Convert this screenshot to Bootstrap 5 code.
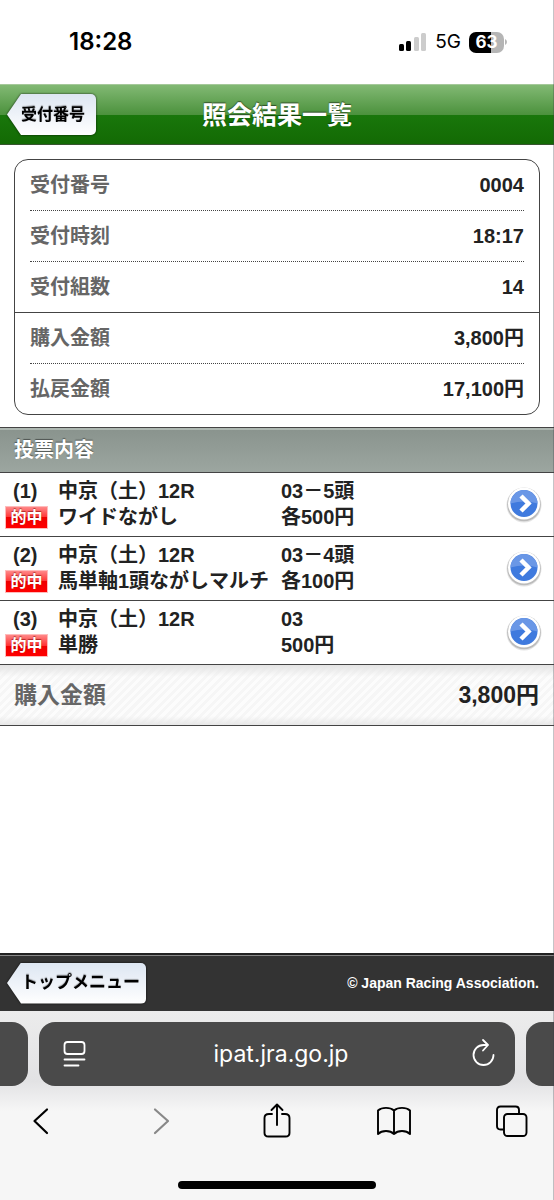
<!DOCTYPE html>
<html lang="ja">
<head>
<meta charset="utf-8">
<meta name="viewport" content="width=device-width, initial-scale=1">
<title>照会結果一覧</title>
<link href="https://cdn.jsdelivr.net/npm/bootstrap@5.3.0/dist/css/bootstrap.min.css" rel="stylesheet">
<style>
  body { font-family: "Liberation Sans", "Noto Sans CJK JP", sans-serif; font-weight: 700; font-size: 20px; line-height: 26px; color: #222; background: #fff; }
  .screen::after { content: ""; position: absolute; top: 0; right: 0; bottom: 0; width: 1px; background: rgba(60,60,70,.3); }
  .ui-font { font-family: Inter, "Noto Sans CJK JP", sans-serif; }

  .status { height: 84px; padding: 0 46px 0 69px; color: #000; }
  .clock { font-size: 24px; font-weight: 600; }
  .net { font-size: 19px; font-weight: 400; }
  .battery { width: 35px; height: 21px; border-radius: 7px; color: #fff; font-size: 17px; line-height: 21px; background: linear-gradient(90deg, #000 63%, #b5b5b5 63%); }

  .titlebar { height: 61px; padding: 0 7px; border-top: 1px solid #a5c99a; border-bottom: 1px solid #37542f;
    background: linear-gradient(#82b974 0, #4c923d 50%, #19770b 50%, #136a04 100%); }
  .titlebar h1 { font-size: 25px; line-height: 36px; font-weight: 700; color: #fff; text-shadow: 0 -1px 1px rgba(0,0,0,.5); }
  .side { flex: 1 1 0; }
  .back-wrap { filter: drop-shadow(0 0 1px rgba(0,0,0,.75)); }
  .back { display: block; height: 41px; border: 0; padding: 0 11px 0 14px; font-size: 16px; font-weight: 700; color: #000;
    background: linear-gradient(#dde6f2, #fff); border-radius: 0 5px 5px 0; text-shadow: 0 -1px 1px rgba(0,0,0,.35);
    clip-path: polygon(0 50%, 14px 0, 100% 0, 100% 100%, 14px 100%); }
  .back-long { font-size: 17px; padding-right: 6px; }

  .summary { margin: 14px 14px 12px; border: 1px solid #444; border-radius: 14px; }
  .summary dl + dl { border-top: 1px solid #444; }
  .summary dl { padding: 0 15px; }
  .summary .line { height: 50px; }
  .summary .line + .line { border-top: 1px dotted #444; height: 51px; }
  .summary dt, .total dt { color: #666; }
  dt, dd { font-weight: 700; margin: 0; }

  .section-head { height: 46px; padding-left: 14px; font-size: 20px; line-height: 26px; font-weight: 700; color: #fff; text-shadow: 0 -1px 1px rgba(0,0,0,.45);
    border-top: 1px solid #444; border-bottom: 1px solid #444; box-shadow: inset 0 2px #adb7b1; background: linear-gradient(#89938d, #9ca6a0); }
  .bet { display: grid; grid-template-columns: 58px minmax(0, 223fr) minmax(0, 225fr) 48px; align-items: center; padding: 5px 0 6px;
    border-bottom: 1px solid #444; color: #222; text-decoration: none; white-space: nowrap; }
  .bet-no { padding-left: 13px; }
  .hit { display: block; width: 43px; height: 23px; margin: 2px 0 1px 5px; font-size: 16px; line-height: 21px; text-align: center; color: #fff;
    background: linear-gradient(#f88 0, #f33 50%, #e00 50%, #f00 100%); border: 1px solid #fbb; text-shadow: 0 -1px 1px rgba(120,0,0,.6); }
  .total { height: 61px; padding: 0 15px 0 14px; font-size: 23px; border-bottom: 1px solid #444;
    background: linear-gradient(#e4e4e4, rgba(255,255,255,0) 20%, rgba(255,255,255,0) 85%, #e8e8e8), repeating-linear-gradient(-45deg, #fcfcfc 0 3px, #f6f6f6 3px 6px); }

  .site-foot { height: 58px; padding: 0 15px 0 7px; background: #333; border-top: 2px solid #222; box-shadow: inset 0 1px #888; color: #fff; font-size: 14px; }

  .browser { background: linear-gradient(#ececec 0, #e2e2e4 70px, #f6f6f6 100px); color: #000; }
  .tabs { gap: 11px; padding-top: 11px; }
  .tab-edge { width: 28px; height: 64px; background: #4a4a4a; }
  .tab-prev { border-radius: 0 16px 16px 0; }
  .tab-next { border-radius: 16px 0 0 16px; }
  .address { height: 64px; padding: 0 16px; background: #4a4a4a; border-radius: 16px; }
  .address input { background: transparent; border: 0; color: #fff; font-size: 23px; line-height: 32px; font-weight: 400; outline: 0; }
  .tool { display: block; border: 0; background: transparent; padding: 0; line-height: 0; color: inherit; }
  .tools { padding: 17px 23px 0; }
  .home { width: 198px; height: 8px; border-radius: 4px; background: #000; margin: 42px auto 11px; }
</style>
</head>
<body>
<div class="screen position-relative d-flex flex-column min-vh-100">

  <div class="status ui-font d-flex align-items-center justify-content-between">
    <span class="clock">18:28</span>
    <div class="d-flex align-items-center">
      <svg class="me-2" width="28" height="18" viewBox="0 0 28 18" aria-hidden="true">
        <rect x="0" y="11" width="5" height="7" rx="1.5"/><rect x="7" y="8" width="5" height="10" rx="1.5"/>
        <rect x="15" y="4" width="5" height="14" rx="1.5" fill="#ccc"/><rect x="22" y="0" width="5" height="18" rx="1.5" fill="#ccc"/>
      </svg>
      <span class="net me-2">5G</span>
      <span class="battery text-center">63</span>
      <svg width="4" height="8" viewBox="0 0 4 8" aria-hidden="true"><path d="M1 1q2 1 2 3t-2 3z" fill="#b5b5b5"/></svg>
    </div>
  </div>

  <header class="titlebar d-flex align-items-center">
    <div class="side d-flex"><div class="back-wrap"><button type="button" class="back">受付番号</button></div></div>
    <h1 class="m-0">照会結果一覧</h1>
    <div class="side"></div>
  </header>

  <main>
    <section class="summary">
      <dl class="m-0">
        <div class="line d-flex align-items-center justify-content-between"><dt>受付番号</dt><dd>0004</dd></div>
        <div class="line d-flex align-items-center justify-content-between"><dt>受付時刻</dt><dd>18:17</dd></div>
        <div class="line d-flex align-items-center justify-content-between"><dt>受付組数</dt><dd>14</dd></div>
      </dl>
      <dl class="m-0">
        <div class="line d-flex align-items-center justify-content-between"><dt>購入金額</dt><dd>3,800円</dd></div>
        <div class="line d-flex align-items-center justify-content-between"><dt>払戻金額</dt><dd>17,100円</dd></div>
      </dl>
    </section>

    <h2 class="section-head d-flex align-items-center m-0">投票内容</h2>

    <a class="bet" href="#bet1">
      <div><span class="bet-no">(1)</span><span class="hit">的中</span></div>
      <div>中京（土）12R<br>ワイドながし</div>
      <div>03－5頭<br>各500円</div>
      <svg width="36" height="38" viewBox="0 0 36 38" aria-hidden="true"><circle cx="18" cy="20" r="17.5" fill="#e4e4e4"/><circle cx="18" cy="19.5" r="16.8" fill="#bbb"/><circle cx="18" cy="18.5" r="16" fill="#fff"/><circle cx="18" cy="18.5" r="13.5" fill="#3f7ade"/><path d="M4.500 18.500a13.500 13.500 0 0 1 27 0q-13-4-27 0z" fill="#6a97e6"/><path d="M15 11l7.500 7.500-7.500 7.500" fill="none" stroke="#fff" stroke-width="4.500"/></svg>
    </a>
    <a class="bet" href="#bet2">
      <div><span class="bet-no">(2)</span><span class="hit">的中</span></div>
      <div>中京（土）12R<br>馬単軸1頭ながしマルチ</div>
      <div>03－4頭<br>各100円</div>
      <svg width="36" height="38" viewBox="0 0 36 38" aria-hidden="true"><circle cx="18" cy="20" r="17.5" fill="#e4e4e4"/><circle cx="18" cy="19.5" r="16.8" fill="#bbb"/><circle cx="18" cy="18.5" r="16" fill="#fff"/><circle cx="18" cy="18.5" r="13.5" fill="#3f7ade"/><path d="M4.500 18.500a13.500 13.500 0 0 1 27 0q-13-4-27 0z" fill="#6a97e6"/><path d="M15 11l7.500 7.500-7.500 7.500" fill="none" stroke="#fff" stroke-width="4.500"/></svg>
    </a>
    <a class="bet" href="#bet3">
      <div><span class="bet-no">(3)</span><span class="hit">的中</span></div>
      <div>中京（土）12R<br>単勝</div>
      <div>03<br>500円</div>
      <svg width="36" height="38" viewBox="0 0 36 38" aria-hidden="true"><circle cx="18" cy="20" r="17.5" fill="#e4e4e4"/><circle cx="18" cy="19.5" r="16.8" fill="#bbb"/><circle cx="18" cy="18.5" r="16" fill="#fff"/><circle cx="18" cy="18.5" r="13.5" fill="#3f7ade"/><path d="M4.500 18.500a13.500 13.500 0 0 1 27 0q-13-4-27 0z" fill="#6a97e6"/><path d="M15 11l7.500 7.500-7.500 7.500" fill="none" stroke="#fff" stroke-width="4.500"/></svg>
    </a>
    <dl class="total d-flex align-items-center justify-content-between m-0"><dt>購入金額</dt><dd>3,800円</dd></dl>
  </main>

  <footer class="site-foot mt-auto d-flex align-items-center justify-content-between">
    <div class="back-wrap"><button type="button" class="back back-long">トップメニュー</button></div>
    <span>© Japan Racing Association.</span>
  </footer>

  <div class="browser">
    <div class="tabs d-flex">
      <div class="tab-edge tab-prev"></div>
      <div class="address d-flex align-items-center flex-grow-1">
        <button type="button" class="tool" aria-label="ページ設定">
          <svg width="38" height="38" viewBox="0 0 38 38" fill="none" stroke="#fff" stroke-width="1.8" stroke-linecap="round"><rect x="9.5" y="7" width="20" height="12" rx="3"/><path d="M9.5 24.5h20M9.5 30.5h14"/></svg>
        </button>
        <input class="ui-font flex-grow-1 w-100 text-center p-0" type="text" value="ipat.jra.go.jp" aria-label="アドレス">
        <button type="button" class="tool" aria-label="再読み込み">
          <svg width="30" height="38" viewBox="0 0 30 38" fill="none" stroke="#fff" stroke-width="1.8" stroke-linecap="round" stroke-linejoin="round"><path d="M24.500 20a10 10 0 1 1-10-10h4.500M14 5l5 5-5 5.500"/></svg>
        </button>
      </div>
      <div class="tab-edge tab-next"></div>
    </div>
    <nav class="tools d-flex align-items-center justify-content-between">
      <button type="button" class="tool" aria-label="戻る"><svg width="36" height="36" viewBox="0 0 36 36" fill="none" stroke="#000" stroke-width="2.2" stroke-linecap="round" stroke-linejoin="round"><path d="M24 6.500L11.500 18 24 30"/></svg></button>
      <button type="button" class="tool" aria-label="進む"><svg width="36" height="36" viewBox="0 0 36 36" fill="none" stroke="#888" stroke-width="2.200" stroke-linecap="round" stroke-linejoin="round"><path d="M14 6.500L27 18 14 30"/></svg></button>
      <button type="button" class="tool" aria-label="共有"><svg width="36" height="36" viewBox="0 0 36 36" fill="none" stroke="#000" stroke-width="1.900" stroke-linecap="round" stroke-linejoin="round"><path d="M13 11h-3q-4.500 0-4.500 4v15q0 3.500 4 3.500h17q4 0 4-3.500V15q0-4-4.500-4h-3M18 22V2M12.500 7L18 1.500 23.500 7"/></svg></button>
      <button type="button" class="tool" aria-label="ブックマーク"><svg width="36" height="36" viewBox="0 0 36 36" fill="none" stroke="#000" stroke-width="1.900" stroke-linecap="round" stroke-linejoin="round"><path d="M17 7.500C13 4 5 4 1 7.500V31c4-4 12-4 16 0 4-4 12-4 16 0V7.500C29 4 21 4 17 7.500zM17 7.500V31"/></svg></button>
      <button type="button" class="tool" aria-label="タブ"><svg width="36" height="36" viewBox="0 0 36 36" fill="none" stroke="#000" stroke-width="1.900" stroke-linejoin="round"><rect x="9" y="11" width="22.500" height="22" rx="3.500"/><path d="M9 26.500H5.500q-3.500 0-3.500-3.500V7q0-3.500 3.500-3.500h15q3.500 0 3.500 3.500v4"/></svg></button>
    </nav>
    <div class="home"></div>
  </div>
</div>
<script src="https://cdn.jsdelivr.net/npm/bootstrap@5.3.0/dist/js/bootstrap.bundle.min.js"></script>
</body>
</html>
